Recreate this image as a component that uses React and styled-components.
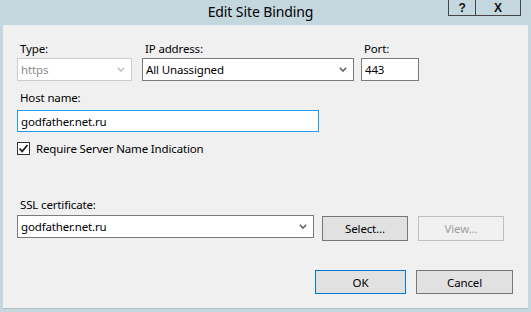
import styled, { createGlobalStyle } from "styled-components";

const GlobalStyle = createGlobalStyle`
  html, body {
    margin: 0;
    padding: 0;
    background: #c4d7df;
  }
  body {
    font-family: "Segoe UI", "Noto Sans", sans-serif;
    font-size: 11.5px;
    letter-spacing: -0.15px;
    color: #000;
  }
`;

const Window = styled.div`
  width: 531px;
  height: 312px;
  display: flex;
  flex-direction: column;
  background: #c4d7df;
  box-sizing: border-box;
  padding: 0 3px 3px 3px;
`;

const TitleBar = styled.div`
  height: 25px;
  display: flex;
  align-items: flex-start;
`;

const Title = styled.div`
  flex: 1;
  text-align: center;
  font-size: 14px;
  letter-spacing: -0.1px;
  line-height: 24px;
  padding-left: 70px;
`;

const CaptionButtons = styled.div`
  display: flex;
  margin-right: 7px;
`;

const CaptionButton = styled.div`
  width: ${(p) => p.$w}px;
  height: 16px;
  box-sizing: border-box;
  border: 1px solid #454545;
  border-top: none;
  border-left: ${(p) => (p.$first ? "1px solid #454545" : "none")};
  display: flex;
  align-items: center;
  justify-content: center;
  font-family: "Liberation Sans", sans-serif;
  font-weight: bold;
  font-size: 12px;
  color: #111;
`;

const Client = styled.div`
  flex: 1;
  background: #f0f0f0;
  border-bottom: 1px solid #b1bfc4;
  padding: 16px 15px 0 14px;
  display: flex;
  flex-direction: column;
`;

const Row = styled.div`
  display: flex;
  align-items: flex-start;
  gap: ${(p) => p.$gap || 0}px;
  margin-top: ${(p) => p.$mt || 0}px;
  justify-content: ${(p) => p.$justify || "flex-start"};
`;

const Field = styled.div`
  display: flex;
  flex-direction: column;
  width: ${(p) => p.$w}px;
  margin-left: ${(p) => p.$ml || 0}px;
`;

const Label = styled.label`
  line-height: 15px;
  height: 15px;
  padding-left: 3px;
  margin-bottom: ${(p) => p.$mb || 2}px;
  white-space: nowrap;
`;

const Box = styled.div`
  height: ${(p) => p.$h || 23}px;
  box-sizing: border-box;
  background: #fff;
  border: 1px solid ${(p) => p.$border || "#7a7a7a"};
  display: flex;
  align-items: center;
  padding: 0 6px 0 3px;
  color: ${(p) => (p.$disabled ? "#8a8a8a" : "#000")};
  white-space: nowrap;
`;

const BoxText = styled.span`
  flex: 1;
  line-height: 15px;
`;

const Chevron = ({ color = "#5f5f5f" }) => (
  <svg width="8" height="5" viewBox="0 0 8 5">
    <polyline
      points="0.8,0.8 4,4 7.2,0.8"
      fill="none"
      stroke={color}
      strokeWidth="1.6"
    />
  </svg>
);

const CheckRow = styled.div`
  display: flex;
  align-items: center;
  gap: 6px;
  margin-top: 10px;
  height: 13px;
  line-height: 13px;
`;

const CheckBox = styled.div`
  width: 13px;
  height: 13px;
  box-sizing: border-box;
  border: 1px solid #333;
  background: #fff;
  display: flex;
  align-items: center;
  justify-content: center;
`;

const Button = styled.div`
  width: ${(p) => p.$w}px;
  height: ${(p) => p.$h || 25}px;
  box-sizing: border-box;
  margin-top: ${(p) => p.$mt || 0}px;
  border: 1px solid ${(p) => p.$border || "#adadad"};
  background: ${(p) => p.$bg || "#e1e1e1"};
  color: ${(p) => p.$color || "#000"};
  display: flex;
  align-items: center;
  justify-content: center;
  line-height: 15px;
`;

export default function App() {
  return (
    <>
      <GlobalStyle />
      <Window>
        <TitleBar>
          <Title>Edit Site Binding</Title>
          <CaptionButtons>
            <CaptionButton $w={28} $first>?</CaptionButton>
            <CaptionButton $w={45}>X</CaptionButton>
          </CaptionButtons>
        </TitleBar>
        <Client>
          <Row>
            <Field $w={115}>
              <Label>Type:</Label>
              <Box $border="#cccccc" $disabled>
                <BoxText>https</BoxText>
                <Chevron color="#c0c0c0" />
              </Box>
            </Field>
            <Field $w={212} $ml={10}>
              <Label>IP address:</Label>
              <Box>
                <BoxText>All Unassigned</BoxText>
                <Chevron />
              </Box>
            </Field>
            <Field $w={58} $ml={7}>
              <Label>Port:</Label>
              <Box>
                <BoxText>443</BoxText>
              </Box>
            </Field>
          </Row>
          <Row $mt={9}>
            <Field $w={302}>
              <Label $mb={5}>Host name:</Label>
              <Box $h={22} $border="#1e9fe2">
                <BoxText>godfather.net.ru</BoxText>
              </Box>
            </Field>
          </Row>
          <CheckRow>
            <CheckBox>
              <svg width="11" height="11" viewBox="0 0 11 11">
                <polyline
                  points="1.5,5.5 4.2,8.3 9.5,2"
                  fill="none"
                  stroke="#222"
                  strokeWidth="1.8"
                />
              </svg>
            </CheckBox>
            <span>Require Server Name Indication</span>
          </CheckRow>
          <Row $mt={42} $gap={8}>
            <Field $w={297}>
              <Label $mb={3}>SSL certificate:</Label>
              <Box>
                <BoxText>godfather.net.ru</BoxText>
                <Chevron />
              </Box>
            </Field>
            <Row $gap={10}>
              <Button $w={86} $mt={19} $border="#777">
                Select...
              </Button>
              <Button
                $w={86}
                $mt={19}
                $border="#bfbfbf"
                $bg="#f0f0f0"
                $color="#a0a0a0"
              >
                View...
              </Button>
            </Row>
          </Row>
          <Row $mt={29} $gap={10} $justify="flex-end">
            <Button $w={91} $h={24} $border="#0078d7">
              OK
            </Button>
            <Button $w={97} $h={24} $border="#777">
              Cancel
            </Button>
          </Row>
        </Client>
      </Window>
    </>
  );
}
